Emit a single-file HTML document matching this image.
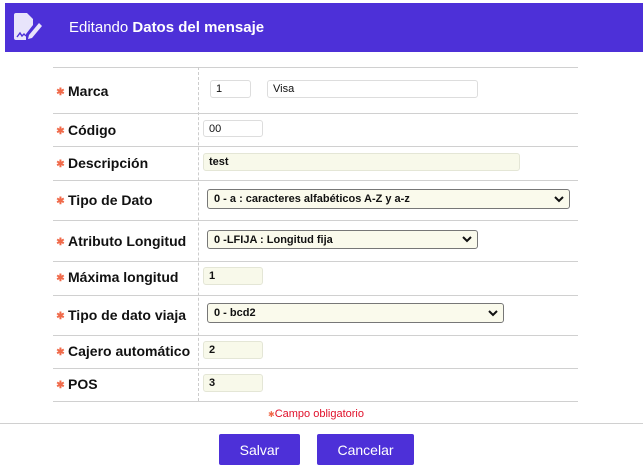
<!DOCTYPE html>
<html><head><meta charset="utf-8"><style>
*{margin:0;padding:0;box-sizing:border-box}
body{width:643px;height:468px;background:#fff;font-family:"Liberation Sans",Arial,sans-serif;position:relative;overflow:hidden}
.a{position:absolute}
.hdr{left:5px;top:3px;width:638px;height:49px;background:#4d30d8}
.ttl{left:69px;top:19px;color:#fff;font-size:15px}
.hl{left:53px;width:525px;height:1px;background:#d0d0d0}
.lab{left:53px;font-size:14px;font-weight:bold;color:#111}
.lab i{font-style:normal;color:#f06a4a;font-size:10px;display:inline-block;width:15px;text-align:center;font-weight:bold;vertical-align:1px}
.in{border:1px solid #ddd;border-radius:3px;font-size:11px;padding:0 5px;display:flex;align-items:center;color:#111}
.y{background:#f8f9ea;border-color:#e4e6d6;font-weight:bold}
.sel{border:1px solid #777;border-radius:3px;background:#fafaec;font-size:11px;font-weight:bold;padding:0 5px 0 6px;display:flex;align-items:center;justify-content:space-between;color:#111}
.btn{background:#4d30d8;color:#fff;font-size:14px;display:flex;align-items:center;justify-content:center;border-radius:2px;top:434px;height:31px}
</style></head><body>
<div class="a hdr"></div>
<svg class="a" style="left:13px;top:12px" width="32" height="30" viewBox="0 0 32 30">
<path d="M1 3a2 2 0 0 1 2-2h11l6 6v6l-7 9v6H3a2 2 0 0 1-2-2z" fill="#e8e4fb"/>
<path d="M4 25l3-4 2 3 2-2 2 2" stroke="#4d30d8" stroke-width="1.4" fill="none"/>
<path d="M16 23l10-12 3 3-10 12-4 1z" fill="#e8e4fb"/>
</svg>
<div class="a ttl">Editando <b>Datos del mensaje</b></div>

<div class="a hl" style="top:67px"></div>
<div class="a hl" style="top:113px"></div>
<div class="a hl" style="top:146px"></div>
<div class="a hl" style="top:180px"></div>
<div class="a hl" style="top:220px"></div>
<div class="a hl" style="top:261px"></div>
<div class="a hl" style="top:295px"></div>
<div class="a hl" style="top:335px"></div>
<div class="a hl" style="top:368px"></div>
<div class="a hl" style="top:401px"></div>
<div class="a" style="left:198px;top:67px;height:334px;border-left:1px dashed #ccc"></div>

<div class="a lab" style="top:83px"><i>✱</i>Marca</div>
<div class="a lab" style="top:122px"><i>✱</i>Código</div>
<div class="a lab" style="top:155px"><i>✱</i>Descripción</div>
<div class="a lab" style="top:192px"><i>✱</i>Tipo de Dato</div>
<div class="a lab" style="top:233px"><i>✱</i>Atributo Longitud</div>
<div class="a lab" style="top:269px"><i>✱</i>Máxima longitud</div>
<div class="a lab" style="top:307px"><i>✱</i>Tipo de dato viaja</div>
<div class="a lab" style="top:343px"><i>✱</i>Cajero automático</div>
<div class="a lab" style="top:376px"><i>✱</i>POS</div>

<div class="a in" style="left:210px;top:80px;width:41px;height:18px">1</div>
<div class="a in" style="left:267px;top:80px;width:211px;height:18px">Visa</div>
<div class="a in" style="left:203px;top:120px;width:60px;height:17px">00</div>
<div class="a in y" style="left:203px;top:153px;width:317px;height:18px">test</div>
<div class="a sel" style="left:207px;top:189px;width:363px;height:20px">0 - a : caracteres alfabéticos A-Z y a-z<svg width="10" height="7" viewBox="0 0 10 7"><path d="M1 1l4 4 4-4" stroke="#111" stroke-width="2" fill="none"/></svg></div>
<div class="a sel" style="left:207px;top:230px;width:271px;height:19px">0 -LFIJA : Longitud fija<svg width="10" height="7" viewBox="0 0 10 7"><path d="M1 1l4 4 4-4" stroke="#111" stroke-width="2" fill="none"/></svg></div>
<div class="a in y" style="left:203px;top:267px;width:60px;height:18px">1</div>
<div class="a sel" style="left:207px;top:303px;width:297px;height:20px">0 - bcd2<svg width="10" height="7" viewBox="0 0 10 7"><path d="M1 1l4 4 4-4" stroke="#111" stroke-width="2" fill="none"/></svg></div>
<div class="a in y" style="left:203px;top:341px;width:60px;height:18px">2</div>
<div class="a in y" style="left:203px;top:374px;width:60px;height:18px">3</div>

<div class="a" style="left:268px;top:408px;font-size:11px;color:#e0102a"><span style="color:#f06a4a;font-size:8px">✱</span>Campo obligatorio</div>
<div class="a" style="left:0;top:423px;width:643px;height:1px;background:#d0d0d0"></div>
<div class="a btn" style="left:219px;width:81px">Salvar</div>
<div class="a btn" style="left:317px;width:97px">Cancelar</div>
</body></html>
